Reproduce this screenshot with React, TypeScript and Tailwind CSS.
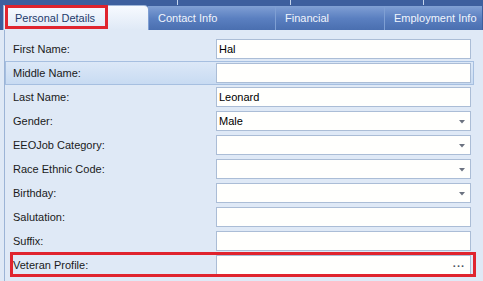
import React from 'react';

type Row = {
  label: string;
  value?: string;
  kind?: 'text' | 'combo' | 'button';
  active?: boolean;
  marked?: boolean;
};

const rows: Row[] = [
  { label: 'First Name:', value: 'Hal' },
  { label: 'Middle Name:', active: true },
  { label: 'Last Name:', value: 'Leonard' },
  { label: 'Gender:', value: 'Male', kind: 'combo' },
  { label: 'EEOJob Category:', kind: 'combo' },
  { label: 'Race Ethnic Code:', kind: 'combo' },
  { label: 'Birthday:', kind: 'combo' },
  { label: 'Salutation:' },
  { label: 'Suffix:' },
  { label: 'Veteran Profile:', kind: 'button', marked: true },
];

const tabs = [
  { label: 'Contact Info', w: 'w-[127px]' },
  { label: 'Financial', w: 'w-[109px]' },
  { label: 'Employment Info', w: 'w-[98px]' },
];

const Field: React.FC<{ row: Row }> = ({ row }) => (
  <div className="flex h-[20px] w-[255px] items-center border border-[#abbdd6] bg-[#fffffd] pl-[2px] pr-[5px]">
    <span className="flex-1 text-[11px] text-black">{row.value}</span>
    {row.kind === 'combo' && (
      <svg width="6" height="4" viewBox="0 0 6 4" className="mt-[1px]">
        <path d="M0 0h6L3 3.5z" fill="#6b7280" />
      </svg>
    )}
    {row.kind === 'button' && (
      <span className="mb-[3px] text-[11px] font-bold leading-none tracking-[1px] text-[#4b5563]">...</span>
    )}
  </div>
);

const App: React.FC = () => {
  return (
    <div className="relative h-[281px] w-[483px] overflow-hidden bg-[#dfe9f6] font-['Liberation_Sans',Arial,sans-serif]">
      {/* tab strip */}
      <div className="relative flex h-[30px] items-end bg-[#3d5f9e] pl-[3px]">
        <div className="absolute left-[177px] top-0 h-[5px] w-px bg-[#c4d4ec]" />
        <div className="absolute left-[290px] top-0 h-[5px] w-px bg-[#c4d4ec]" />
        <div className="absolute left-[423px] top-0 h-[5px] w-px bg-[#c4d4ec]" />

        <div className="relative flex h-[25px] w-[145px] items-center rounded-tr-[4px] border-l border-t border-[#9fb6d8] bg-gradient-to-b from-[#f7faff] to-[#dfe9f6] pl-[11px] text-[11px] text-[#1e3a6b]">
          Personal Details
          <div className="absolute -top-[1px] left-[1px] h-[24px] w-[103px] border-[3px] border-[#e0242e]" />
        </div>

        {tabs.map((t) => (
          <div
            key={t.label}
            className={`flex h-[24px] ${t.w} items-center border-l border-t border-[#7f9fd3] bg-gradient-to-b from-[#7d9dd3] via-[#5a7fc0] to-[#4a6fb0] pl-[9px] text-[11px] text-[#f1f5fc]`}
          >
            {t.label}
          </div>
        ))}
      </div>

      {/* content */}
      <div className="ml-[4px] h-[251px] border-l border-[#9cb4d6] pt-[7px]">
        {rows.map((row) => (
          <div
            key={row.label}
            className={`relative flex h-[24px] w-[469px] items-center border ${
              row.active
                ? 'border-[#a6bfe0] bg-gradient-to-b from-[#dce8f7] to-[#c8dbf2]'
                : 'border-transparent'
            }`}
          >
            <div className="w-[210px] pl-[7px] text-[11px] text-[#1a1a1a]">{row.label}</div>
            <Field row={row} />
            {row.marked && (
              <div className="absolute -right-[3px] -top-[2px] bottom-[-1px] left-[4px] border-[3px] border-[#e0242e]" />
            )}
          </div>
        ))}
      </div>
    </div>
  );
};

export default App;
